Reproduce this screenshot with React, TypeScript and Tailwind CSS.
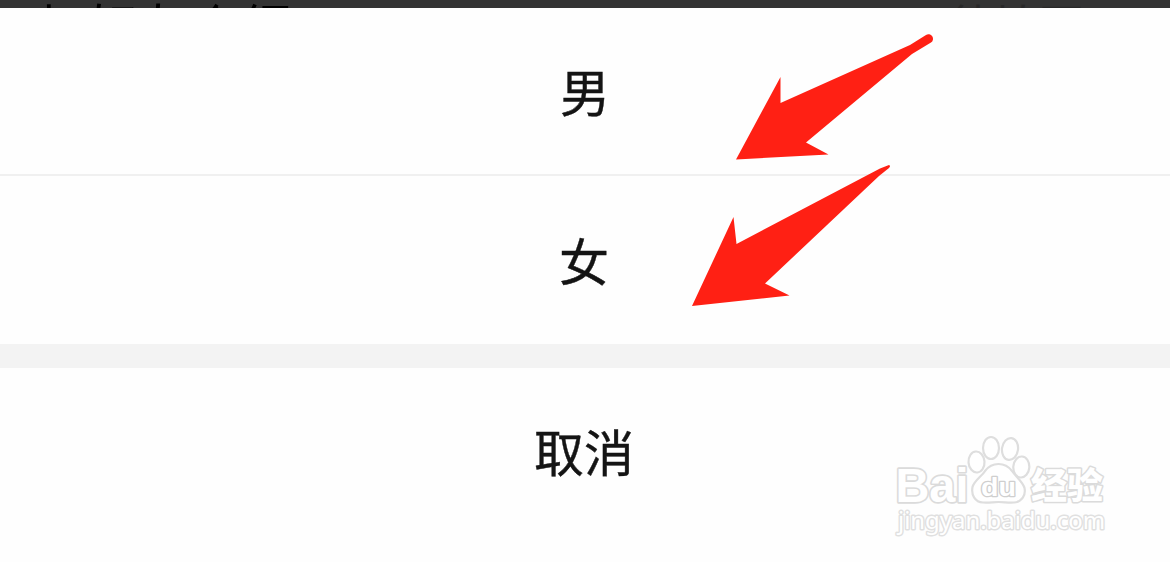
const cjk = "font-['Noto_Sans_CJK_SC','Liberation_Sans',sans-serif]";

function Watermark() {
  return (
    <svg className="absolute left-[880px] top-[425px]" width="240" height="125" viewBox="0 0 240 125" aria-label="Baidu 经验">
      <g fill="#fff" stroke="#dedede" strokeWidth="2.2" strokeLinejoin="round">
        <ellipse cx="111" cy="23" rx="8" ry="11" />
        <ellipse cx="130" cy="24" rx="8" ry="11" transform="rotate(8 130 24)" />
        <ellipse cx="96.500" cy="37" rx="8" ry="10.500" transform="rotate(-4 96.500 37)" />
        <ellipse cx="141.300" cy="42" rx="8" ry="10.500" transform="rotate(4 141.300 42)" />
        <path d="M118.500 39C112 39 108 42 105 46C102 51 94 56 92.500 62C91 70 95 77 103 77.500C109 78 113 77 118.500 77C124 77 129 78 134 77.500C142 77 146 70 144.500 63C143 57 136 52 132 46C129 42 125 39 118.500 39Z" />
      </g>
      <g fill="#fff" stroke="#dbdbdb" strokeWidth="3.4" strokeLinejoin="round" paintOrder="stroke">
        <text x="15.500" y="77" fontSize="48" fontWeight="700" fontFamily="Liberation Sans, sans-serif" textLength="73" lengthAdjust="spacingAndGlyphs">Bai</text>
        <text x="101" y="71" fontSize="26" strokeWidth="2.6" stroke="#cfcfcf" fontWeight="700" fontFamily="Liberation Sans, sans-serif" textLength="35" lengthAdjust="spacingAndGlyphs">du</text>
        <text x="151" y="74" fontSize="36" strokeWidth="3" fontWeight="900" fontFamily="Noto Sans CJK SC, sans-serif" textLength="72" lengthAdjust="spacingAndGlyphs">经验</text>
        <text x="18" y="104" fontSize="23" strokeWidth="2.8" stroke="#e0e0e0" fontFamily="Noto Sans, sans-serif" textLength="207" lengthAdjust="spacingAndGlyphs">jingyan.baidu.com</text>
      </g>
    </svg>
  );
}

function Option({ label, className }: { label: string; className: string }) {
  return (
    <button className={`block w-full shrink-0 text-center text-[50px] leading-[72px] text-[#141414] [-webkit-text-stroke:0.4px_#141414] ${className}`}>
      {label}
    </button>
  );
}

export default function App() {
  return (
    <main className={`relative flex h-[562px] w-[1170px] flex-col overflow-hidden bg-[#fefefe] ${cjk}`}>
      <header className="flex h-2 shrink-0 items-start justify-between overflow-hidden bg-[#333] pl-[37px] pr-[86px]">
        <span className="text-[51px] leading-[51px] text-black">加好友介绍</span>
        <span className="text-[45px] leading-[47px] text-[#282828]">待填写</span>
      </header>
      <Option label="男" className="h-[168px] border-b-2 border-[#f0f0f0] pb-[3px]" />
      <Option label="女" className="h-[168px] pb-[3px] pr-0.5" />
      <div className="h-6 shrink-0 bg-[#f3f3f3]" />
      <Option label="取消" className="h-[194px] pb-[30px] pr-0.5" />
      <svg className="pointer-events-none absolute inset-0" width="1170" height="562" fill="#ff2014">
        <path d="M736 159.500L780.500 77V103L910 45L926 35A4.500 4.500 0 0 1 931 42.500L912 54L806 142.500L828.500 154.500Z" />
        <path d="M692 306L733.500 217L736.500 244L880 168.500L889 165Q891 166 889 168L879 176L765 283.500L789.500 295.500Z" />
      </svg>
      <Watermark />
    </main>
  );
}
